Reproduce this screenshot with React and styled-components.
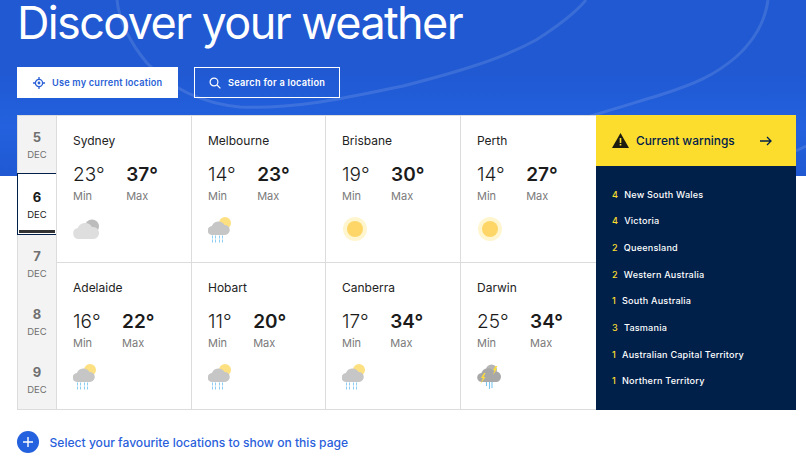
import React from 'react'
import styled, { createGlobalStyle } from 'styled-components'

const GlobalStyle = createGlobalStyle`
    html, body {
        margin: 0;
        padding: 0;
        background: #fff;
        font-family: Inter, "Liberation Sans", sans-serif;
    }
    body { overflow: hidden; }
`;

const Page = styled.div`
    width: 806px;
    height: 464px;
    overflow: hidden;
    position: relative;
`;

const Hero = styled.header`
    position: relative;
    height: 176px;
    padding: 0 0 0 17px;
    box-sizing: border-box;
    background: linear-gradient(180deg, #2059d2 0%, #2059d2 40%, #2361de 72%, #2059d2 100%);
    overflow: hidden;
`;

const HeroLines = styled.svg`
    position: absolute;
    left: 0;
    top: 0;
`;

const Title = styled.h1`
    position: relative;
    margin: 0;
    height: 67px;
    color: #fff;
    font-size: 45px;
    line-height: 45px;
    font-weight: 400;
    letter-spacing: -1.63px;
    white-space: nowrap;
`;

const Buttons = styled.div`
    position: relative;
    display: flex;
    gap: 16px;
`;

const Button = styled.button`
    height: 31px;
    width: ${p => p.$width}px;
    padding: 0 0 0 ${p => p.$pad}px;
    box-sizing: border-box;
    display: flex;
    align-items: center;
    gap: 7px;
    font-family: inherit;
    font-size: 9.2px;
    font-weight: 600;
    letter-spacing: ${p => (p.$solid ? '0.2px' : '0.27px')};
    border: 1px solid #fff;
    background: ${p => (p.$solid ? '#fff' : 'transparent')};
    color: ${p => (p.$solid ? '#2a5fd6' : '#fff')};
`;

const Board = styled.main`
    display: flex;
    width: 779px;
    height: 295px;
    margin: -61px 0 0 17px;
    position: relative;
`;

const Days = styled.nav`
    width: 39px;
    flex: none;
    box-sizing: border-box;
    display: flex;
    flex-direction: column;
    background: #f3f3f3;
    border: 1px solid #dcdcdc;
    border-right: none;
`;

const Day = styled.div`
    flex: 1;
    display: flex;
    flex-direction: column;
    align-items: center;
    justify-content: center;
    gap: 4px;
    box-sizing: border-box;
    color: #707070;
`;

const ActiveDay = styled(Day)`
    flex: none;
    height: 62px;
    margin: -1px -1px 0;
    padding-top: 2px;
    color: #1a1a1a;
    background: #fff;
    border: 1px solid #00204a;
    box-shadow: inset 0 0 0 1px #fff, inset 0 -4px 0 #333;
`;

const DayNum = styled.span`
    font-size: 13px;
    line-height: 16px;
    font-weight: 700;
`;

const DayMonth = styled.span`
    font-size: 9.5px;
    line-height: 12px;
`;

const Grid = styled.section`
    width: 540px;
    flex: none;
    box-sizing: border-box;
    display: grid;
    grid-template-columns: 135px 134px 135px 136px;
    grid-template-rows: 147px 1fr;
    background: #fff;
    border-top: 1px solid #dcdcdc;
    border-bottom: 1px solid #dcdcdc;
`;

const Cell = styled.article`
    box-sizing: border-box;
    padding: 17px 0 0 16px;
    border-left: 1px solid #dcdcdc;
    border-bottom: ${p => (p.$top ? '1px solid #dcdcdc' : 'none')};
`;

const City = styled.div`
    font-size: 12px;
    line-height: 16px;
    color: #222;
`;

const Temps = styled.div`
    display: flex;
    gap: 21.5px;
    margin-top: 14px;
`;

const Temp = styled.div`
    display: flex;
    flex-direction: column;
`;

const Degrees = styled.span`
    font-size: 19px;
    line-height: 24px;
    font-weight: ${p => (p.$max ? 600 : 300)};
    color: #1b1b1b;
`;

const TempLabel = styled.span`
    font-size: 11px;
    line-height: 14px;
    margin-top: 2px;
    color: #7a7a7a;
`;

const IconSlot = styled.div`
    margin-top: 14px;
    height: 27px;
`;

const Warnings = styled.aside`
    flex: 1;
    display: flex;
    flex-direction: column;
    background: #00204a;
`;

const WarningHead = styled.div`
    height: 51px;
    flex: none;
    box-sizing: border-box;
    padding: 0 24px 0 16px;
    display: flex;
    align-items: center;
    background: #fcdd2e;
    color: #00204a;
    font-size: 11.9px;
    font-weight: 500;
    gap: 7px;
`;

const WarningTitle = styled.span`
    flex: 1;
`;

const WarningList = styled.ul`
    list-style: none;
    margin: 0;
    padding: 20.5px 0 0 16px;
    display: flex;
    flex-direction: column;
    gap: 10.7px;
`;

const WarningRow = styled.li`
    display: flex;
    gap: 6px;
    font-size: 9.1px;
    line-height: 16px;
    font-weight: 500;
    letter-spacing: 0.2px;
    color: #fff;
`;

const WarningCount = styled.span`
    color: #fcdd2e;
`;

const Favourite = styled.a`
    display: flex;
    align-items: center;
    gap: 10.5px;
    margin: 21px 0 0 17px;
    color: #2a5fdc;
    font-size: 12.1px;
    font-weight: 500;
`;

const PlusDisc = styled.span`
    width: 22px;
    height: 22px;
    border-radius: 50%;
    background: #2361de;
    display: flex;
    align-items: center;
    justify-content: center;
`;

const Crosshair = () => (
    <svg width="12" height="12" viewBox="0 0 12 12" fill="none" stroke="#2a5fd6">
        <circle cx="6" cy="6" r="3.6" strokeWidth="1.3" />
        <circle cx="6" cy="6" r="1.4" fill="#2a5fd6" stroke="none" />
        <path d="M6 0v2.4M6 9.6V12M0 6h2.4M9.6 6H12" strokeWidth="1.3" />
    </svg>
)

const SearchGlyph = () => (
    <svg width="12" height="12" viewBox="0 0 12 12" fill="none" stroke="#fff" strokeWidth="1.2">
        <circle cx="5" cy="5" r="3.9" />
        <path d="M8 8l3.4 3.4" />
    </svg>
)

const WeatherIcon = ({ type }) => {
    if (type === 'cloud') {
        return (
            <svg width="28" height="24" viewBox="0 0 28 24">
                <circle cx="19" cy="9.500" r="7" fill="#bcbcbc" />
                <path fill="#dedede" d="M5.500 22a5.500 5.500 0 0 1-.8-10.900A8 8 0 0 1 19 10a6 6 0 0 1 2 12z" />
            </svg>
        )
    }
    if (type === 'sun') {
        return (
            <svg width="25" height="25" viewBox="0 0 25 25">
                <circle cx="13" cy="12" r="12" fill="#fff6cf" />
                <circle cx="13" cy="12" r="8" fill="#fdd667" />
            </svg>
        )
    }
    if (type === 'storm') {
        return (
            <svg width="25" height="25" viewBox="0 0 25 25">
                <circle cx="14.500" cy="6" r="5.500" fill="#b5b5b5" />
                <path fill="#a8a8a8" d="M5 18a4.500 4.500 0 0 1-.6-9A7 7 0 0 1 17 7.500a5.300 5.300 0 0 1 3 10.500z" />
                <path fill="#fcdc3c" d="M7 9l-3 5h2L3.500 20l5-7H6.500l2-4zM18.500 2l-2.500 4h1.500L16 11l4-6h-1.500L20.500 2z" />
                <g stroke="#7cc5ee" strokeWidth="1.100">
                    <path d="M9.500 18v4M12.500 18v7M15 18v6" />
                </g>
            </svg>
        )
    }
    return (
        <svg width="24" height="27" viewBox="0 0 24 27">
            <circle cx="17" cy="6" r="6" fill="#fde082" />
            <path fill="#c6c6c6" d="M4.500 18a4.500 4.500 0 0 1-.6-9A7 7 0 0 1 16.500 8a5 5 0 0 1 .5 10z" />
            <g stroke="#8ccff2" strokeWidth="1" strokeDasharray="3 1">
                <path d="M4.500 18.500v8M7.500 18.500v8M11.500 18.500v8M14.500 18.500v7" />
            </g>
        </svg>
    )
}

const row1 = [
    { city: 'Sydney', min: 23, max: 37, icon: 'cloud' },
    { city: 'Melbourne', min: 14, max: 23, icon: 'rain' },
    { city: 'Brisbane', min: 19, max: 30, icon: 'sun' },
    { city: 'Perth', min: 14, max: 27, icon: 'sun' },
]

const row2 = [
    { city: 'Adelaide', min: 16, max: 22, icon: 'rain' },
    { city: 'Hobart', min: 11, max: 20, icon: 'rain' },
    { city: 'Canberra', min: 17, max: 34, icon: 'rain' },
    { city: 'Darwin', min: 25, max: 34, icon: 'storm' },
]

const days = [5, 6, 7, 8, 9]

const warnings = [
    [4, 'New South Wales'],
    [4, 'Victoria'],
    [2, 'Queensland'],
    [2, 'Western Australia'],
    [1, 'South Australia'],
    [3, 'Tasmania'],
    [1, 'Australian Capital Territory'],
    [1, 'Northern Territory'],
]

const CityCell = ({ city, min, max, icon, top }) => (
    <Cell $top={top}>
        <City>{city}</City>
        <Temps>
            <Temp>
                <Degrees>{min}°</Degrees>
                <TempLabel>Min</TempLabel>
            </Temp>
            <Temp>
                <Degrees $max>{max}°</Degrees>
                <TempLabel>Max</TempLabel>
            </Temp>
        </Temps>
        <IconSlot><WeatherIcon type={icon} /></IconSlot>
    </Cell>
)

const App = () => {
    return (
        <Page>
            <GlobalStyle />
            <Hero>
                <HeroLines width="806" height="176" viewBox="0 0 806 176" fill="none" stroke="#fff" strokeOpacity="0.12" strokeWidth="3">
                    <path d="M117 0C119 20 130 43 147 63C170 88 200 103 240 107C300 109 350 97 403 86C450 74 500 60 536 40C555 28 575 13 586 0" />
                    <path d="M768 0C765 22 755 40 736 57C715 75 695 84 660 95C630 104 615 109 570 122" />
                    <path d="M796 151L806 146" />
                </HeroLines>
                <Title>Discover your weather</Title>
                <Buttons>
                    <Button $solid $width={161} $pad={15}><Crosshair />Use my current location</Button>
                    <Button $width={146} $pad={14}><SearchGlyph />Search for a location</Button>
                </Buttons>
            </Hero>
            <Board>
                <Days>
                    {days.map(d => {
                        const Item = d === 6 ? ActiveDay : Day
                        return (
                            <Item key={d}>
                                <DayNum>{d}</DayNum>
                                <DayMonth>DEC</DayMonth>
                            </Item>
                        )
                    })}
                </Days>
                <Grid>
                    {row1.map(c => <CityCell key={c.city} {...c} top />)}
                    {row2.map(c => <CityCell key={c.city} {...c} />)}
                </Grid>
                <Warnings>
                    <WarningHead>
                        <svg width="17" height="15" viewBox="0 0 17 15">
                            <path fill="#1c1c10" d="M8.500 0L17 15H0z" />
                            <path fill="#fcdd2e" d="M7.700 5h1.600v5H7.700zM7.700 11h1.600v1.600H7.700z" />
                        </svg>
                        <WarningTitle>Current warnings</WarningTitle>
                        <svg width="12" height="10" viewBox="0 0 12 10" fill="none" stroke="#00204a" strokeWidth="1.300">
                            <path d="M0 5h11M7 1l4 4-4 4" />
                        </svg>
                    </WarningHead>
                    <WarningList>
                        {warnings.map(([count, name]) => (
                            <WarningRow key={name}>
                                <WarningCount>{count}</WarningCount>
                                {name}
                            </WarningRow>
                        ))}
                    </WarningList>
                </Warnings>
            </Board>
            <Favourite>
                <PlusDisc>
                    <svg width="10" height="10" viewBox="0 0 10 10" stroke="#fff" strokeWidth="1.400">
                        <path d="M5 0v10M0 5h10" />
                    </svg>
                </PlusDisc>
                Select your favourite locations to show on this page
            </Favourite>
        </Page>
    )
}

export default App
